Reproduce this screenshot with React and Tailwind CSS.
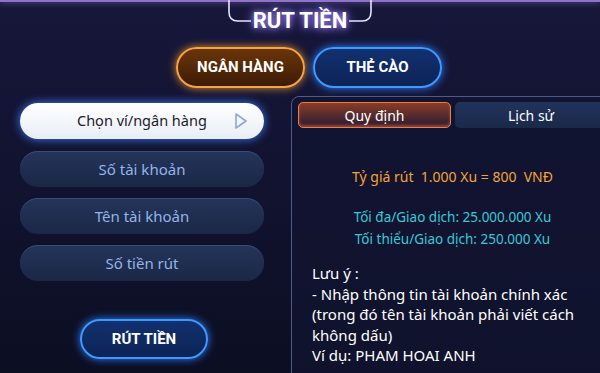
const font = { fontFamily: '"Noto Sans", "Open Sans", sans-serif' };

const TitleFrame = () => (
  <svg width="150" height="26" viewBox="0 0 150 26" className="absolute left-[225px] top-0" fill="none">
    <path d="M4 -2 V12 Q4 21 13 21 H26" stroke="#e9e4ff" strokeWidth="1.6" />
    <path d="M146 -2 V12 Q146 21 137 21 H124" stroke="#e9e4ff" strokeWidth="1.6" />
  </svg>
);

const Pill = ({ children }) => (
  <div className="h-[36px] w-[244px] rounded-full bg-gradient-to-b from-[#24355a] to-[#1a2746] shadow-[inset_0_1px_0_rgba(120,150,210,0.25)] flex items-center justify-center text-[15px] text-[#93b4ea]">
    {children}
  </div>
);

export default function App() {
  return (
    <div
      className="relative w-[600px] h-[373px] overflow-hidden bg-gradient-to-b from-[#17173a] via-[#111330] to-[#0c0e22] text-white"
      style={font}
    >
      <div className="absolute inset-x-0 top-0 h-[2px] bg-[#8f73c9] shadow-[0_0_6px_#8f73c9]" />
      <TitleFrame />

      <div className="flex justify-center pt-[8px] h-[42px]">
        <h1 className="text-[22px] font-bold leading-[26px] text-white [text-shadow:0_0_6px_#a58cff,0_0_12px_#7d64e0]" style={{ fontFamily: '"Roboto", "Noto Sans", sans-serif' }}>
          RÚT TIỀN
        </h1>
      </div>

      <div className="flex gap-[8px] pl-[176px] mt-[5px]">
        <button className="h-[41px] w-[129px] rounded-full border-2 border-[#f5a640] bg-gradient-to-b from-[#6b3508] to-[#3d1c06] shadow-[0_0_8px_#e08a2a] text-[15px] font-bold text-white" style={{ fontFamily: '"Roboto", sans-serif' }}>
          NGÂN HÀNG
        </button>
        <button className="h-[41px] w-[129px] rounded-full border-2 border-[#3d9bff] bg-gradient-to-b from-[#123170] to-[#0d2356] shadow-[0_0_8px_#2b7fff] text-[15px] font-bold text-white" style={{ fontFamily: '"Roboto", sans-serif' }}>
          THẺ CÀO
        </button>
      </div>

      <div className="flex mt-[10px]">
        <div className="flex flex-col pl-[20px] pt-[5px] w-[291px] shrink-0">
          <div className="h-[36px] w-[244px] rounded-full bg-gradient-to-b from-white to-[#e8edf6] shadow-[0_0_10px_#3f7fff] flex items-center pl-[57px] pr-[16px] text-[14.5px] text-[#1b1b2a]">
            <span className="flex-1">Chọn ví/ngân hàng</span>
            <svg width="14" height="18" viewBox="0 0 14 18" fill="none">
              <path d="M2 2 L12 9 L2 16 Z" stroke="#8ea6dc" strokeWidth="1.6" strokeLinejoin="round" />
            </svg>
          </div>
          <div className="flex flex-col gap-[11px] mt-[12px]">
            <Pill>Số tài khoản</Pill>
            <Pill>Tên tài khoản</Pill>
            <Pill>Số tiền rút</Pill>
          </div>
          <button className="mt-[38px] ml-[60px] h-[40px] w-[128px] rounded-full border-2 border-[#3d9bff] bg-gradient-to-b from-[#123170] to-[#0d2356] shadow-[0_0_8px_#2b7fff] text-[15px] font-bold text-white" style={{ fontFamily: '"Roboto", sans-serif' }}>
            RÚT TIỀN
          </button>
        </div>

        <div className="w-[322px] shrink-0 h-[290px] -mt-[2px] rounded-tl-[8px] border border-[#4b5b8c] bg-[#111431]/80 p-[5px] pl-[6px]">
          <div className="flex gap-[4px]">
            <div className="h-[26px] w-[153px] rounded-[5px] border border-[#f07a44] bg-gradient-to-b from-[#8a3c22] to-[#2b1830] shadow-[inset_0_-2px_3px_rgba(240,122,68,0.5)] flex items-center justify-center text-[14px] text-white">
              Quy định
            </div>
            <div className="h-[26px] flex-1 rounded-[5px] bg-gradient-to-b from-[#22335c] to-[#1a2849] flex items-center justify-center text-[14px] text-white">
              Lịch sử
            </div>
          </div>
          <p className="text-center text-[14px] text-[#f2a33a] mt-[38px] whitespace-pre">{"Tỷ giá rút  1.000 Xu = 800  VNĐ"}</p>
          <div className="text-center text-[13.5px] leading-[22px] text-[#36c9d8] mt-[19px]">
            <p>Tối đa/Giao dịch: 25.000.000 Xu</p>
            <p>Tối thiểu/Giao dịch: 250.000 Xu</p>
          </div>
          <div className="text-[15px] leading-[20.5px] text-white mt-[13px] pl-[14px]">
            <p>Lưu ý :</p>
            <p>- Nhập thông tin tài khoản chính xác</p>
            <p>(trong đó tên tài khoản phải viết cách</p>
            <p>không dấu)</p>
            <p>Ví dụ: PHAM HOAI ANH</p>
          </div>
        </div>
      </div>
    </div>
  );
}
